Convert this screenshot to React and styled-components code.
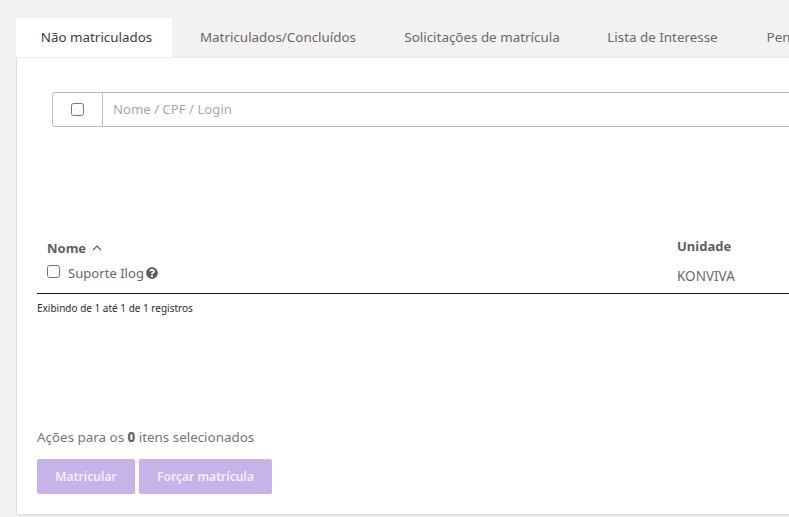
import React from "react";
import styled, { createGlobalStyle } from "styled-components";

const GlobalStyle = createGlobalStyle`
  html, body {
    margin: 0;
    padding: 0;
    height: 517px;
    overflow: hidden;
    background: #f2f2f2;
    font-family: "Noto Sans", "Open Sans", sans-serif;
  }
`;

const Page = styled.div`
  width: 789px;
  height: 517px;
  overflow: hidden;
  padding: 18px 0 0 16px;
  box-sizing: border-box;
`;

const Tabs = styled.div`
  display: flex;
  width: 900px;
  height: 39px;
`;

const Tab = styled.div`
  flex: none;
  width: ${(p) => p.$width}px;
  box-sizing: border-box;
  padding: 0 0 2px ${(p) => (p.$active ? "5px" : "0")};
  display: flex;
  align-items: center;
  justify-content: center;
  font-size: 13.4px;
  white-space: nowrap;
  color: ${(p) => (p.$active ? "#3d3d3d" : "#6e6764")};
  background: ${(p) => (p.$active ? "#fff" : "transparent")};
`;

const Panel = styled.div`
  margin-left: 1px;
  width: 900px;
  height: 457px;
  box-sizing: border-box;
  background: #fff;
  border-top: 1px solid #ececec;
  box-shadow: 0 1px 2px rgba(0, 0, 0, 0.12), -1px 0 1px rgba(0, 0, 0, 0.04);
  padding: 34px 0 0 20px;
  display: flex;
  flex-direction: column;
`;

const Search = styled.div`
  margin-left: 15px;
  height: 35px;
  width: 860px;
  box-sizing: border-box;
  display: flex;
  border: 1px solid #bcbcbc;
  border-radius: 3px;
`;

const SearchCheck = styled.div`
  width: 49px;
  flex: none;
  display: flex;
  align-items: center;
  justify-content: center;
  border-right: 1px solid #bcbcbc;
`;

const Box = styled.span`
  display: block;
  width: 13px;
  height: 13px;
  box-sizing: border-box;
  border: 1px solid #767676;
  border-radius: 2.5px;
  background: #fff;
  flex: none;
`;

const SearchText = styled.div`
  padding: 0 0 1px 10px;
  display: flex;
  align-items: center;
  font-size: 13.2px;
  color: #a8a8a8;
`;

const Table = styled.div`
  margin-top: 106px;
  width: 860px;
  height: 61px;
  box-sizing: border-box;
  border-bottom: 1px solid #1c1c1c;
  display: grid;
  grid-template-columns: 630px 1fr;
  grid-template-rows: 25px 32px;
  padding-left: 10px;
`;

const HeadCell = styled.div`
  display: flex;
  align-items: center;
  gap: 6px;
  font-size: 13px;
  font-weight: 700;
  color: #635d5b;
  padding-top: ${(p) => (p.$sorted ? "4px" : "0")};
`;

const Cell = styled.div`
  display: flex;
  align-items: center;
  font-size: 13.5px;
  color: #6e6764;
  padding-top: 4px;
`;

const UserCell = styled.div`
  display: flex;
  align-items: flex-start;
  gap: 8px;
  padding-top: 6px;
  font-size: 13.1px;
  color: #6e6764;
`;

const UserBox = styled(Box)`
  margin-top: 1px;
`;

const Name = styled.span`
  display: flex;
  align-items: center;
  gap: 2px;
  line-height: 18px;
`;

const Info = styled.div`
  margin-top: 8px;
  font-size: 10px;
  line-height: 12px;
  color: #2c2c2c;
`;

const Footer = styled.div`
  margin-top: auto;
  padding-bottom: 20px;
`;

const Selected = styled.div`
  font-size: 13.4px;
  line-height: 18px;
  color: #7a7472;
  margin-bottom: 13px;
  b {
    color: #5f5a58;
  }
`;

const Actions = styled.div`
  display: flex;
  gap: 4px;
`;

const Action = styled.button`
  height: 35px;
  width: ${(p) => p.$width}px;
  padding: 0;
  border: 0;
  border-radius: 2px;
  background: #c7b3e8;
  color: #f4effb;
  font-family: inherit;
  font-size: 12.1px;
  font-weight: 600;
`;

const Help = () => (
  <svg width="12" height="12" viewBox="0 0 512 512" fill="#5c5c5c">
    <path d="M504 256c0 137-111 248-248 248S8 393 8 256 119 8 256 8s248 111 248 248zM262.7 90c-54.5 0-89.3 23-116.6 63.8-3.5 5.3-2.4 12.4 2.7 16.2l34.7 26.3c5.2 3.9 12.6 3 16.7-2.1 17.9-22.7 30.1-35.8 57.3-35.8 20.4 0 45.7 13.1 45.7 32.9 0 15-12.4 22.7-32.5 34-23.5 13.2-54.6 29.6-54.6 70.7V300c0 6.6 5.4 12 12 12h56c6.6 0 12-5.4 12-12v-1.3c0-28.5 83.2-29.7 83.2-106.7 0-58-60.2-102-116.6-102zM256 338c-25.4 0-46 20.6-46 46 0 25.4 20.6 46 46 46s46-20.6 46-46c0-25.4-20.6-46-46-46z" />
  </svg>
);

const Chevron = () => (
  <svg width="10" height="6" viewBox="0 0 10 6" fill="none" stroke="#5c5c5c" strokeWidth="1.2">
    <path d="M1 5l4-4 4 4" />
  </svg>
);

export default function App() {
  return (
    <Page>
      <GlobalStyle />
      <Tabs>
        <Tab $active $width={156}>Não matriculados</Tab>
        <Tab $width={212}>Matriculados/Concluídos</Tab>
        <Tab $width={196}>Solicitações de matrícula</Tab>
        <Tab $width={165}>Lista de Interesse</Tab>
        <Tab $width={110}>Pendentes</Tab>
      </Tabs>
      <Panel>
        <Search>
          <SearchCheck>
            <Box />
          </SearchCheck>
          <SearchText>Nome / CPF / Login</SearchText>
        </Search>
        <Table>
          <HeadCell $sorted>
            Nome <Chevron />
          </HeadCell>
          <HeadCell>Unidade</HeadCell>
          <UserCell>
            <UserBox />
            <Name>
              Suporte Ilog <Help />
            </Name>
          </UserCell>
          <Cell>KONVIVA</Cell>
        </Table>
        <Info>Exibindo de 1 até 1 de 1 registros</Info>
        <Footer>
          <Selected>
            Ações para os <b>0</b> itens selecionados
          </Selected>
          <Actions>
            <Action $width={98}>Matricular</Action>
            <Action $width={133}>Forçar matrícula</Action>
          </Actions>
        </Footer>
      </Panel>
    </Page>
  );
}
